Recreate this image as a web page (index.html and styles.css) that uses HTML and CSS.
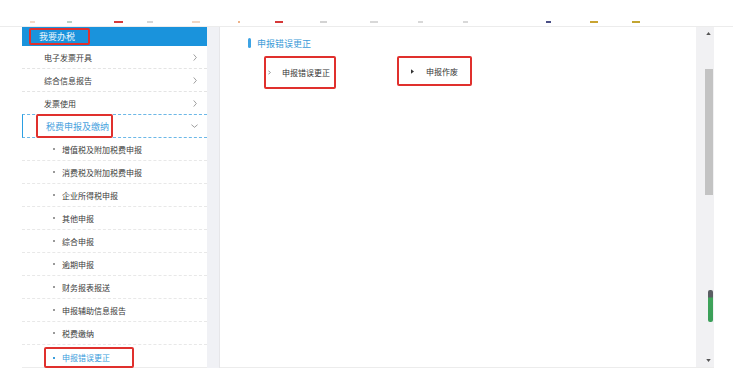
FILE: index.html
```html
<!DOCTYPE html>
<html lang="zh">
<head>
<meta charset="utf-8">
<title>申报错误更正</title>
<link rel="stylesheet" href="styles.css">
</head>
<body>
<div class="topbar">
  <span class="mk m1"></span><span class="mk m2"></span><span class="mk m3"></span><span class="mk m4"></span><span class="mk m5"></span><span class="mk m6"></span><span class="mk m7"></span><span class="mk m8"></span><span class="mk m9"></span><span class="mk m10"></span><span class="mk m11"></span><span class="mk m12"></span><span class="mk m13"></span><span class="mk m14"></span>
</div>
<div class="frame">
  <nav class="sidebar">
    <div class="side-head"><span class="redbox head-box">我要办税</span></div>
    <div class="row"><span>电子发票开具</span><svg class="chev" viewBox="0 0 4 8"><polyline points="0.5,0.5 3.5,4 0.5,7.5"/></svg></div>
    <div class="row"><span>综合信息报告</span><svg class="chev" viewBox="0 0 4 8"><polyline points="0.5,0.5 3.5,4 0.5,7.5"/></svg></div>
    <div class="row"><span>发票使用</span><svg class="chev" viewBox="0 0 4 8"><polyline points="0.5,0.5 3.5,4 0.5,7.5"/></svg></div>
    <div class="row parent"><span class="redbox parent-box">税费申报及缴纳</span><svg class="chev-down" viewBox="0 0 8 4"><polyline points="0.5,0.5 4,3.5 7.5,0.5"/></svg></div>
    <div class="sub"><i class="dot"></i>增值税及附加税费申报</div>
    <div class="sub"><i class="dot"></i>消费税及附加税费申报</div>
    <div class="sub"><i class="dot"></i>企业所得税申报</div>
    <div class="sub"><i class="dot"></i>其他申报</div>
    <div class="sub"><i class="dot"></i>综合申报</div>
    <div class="sub"><i class="dot"></i>逾期申报</div>
    <div class="sub"><i class="dot"></i>财务报表报送</div>
    <div class="sub"><i class="dot"></i>申报辅助信息报告</div>
    <div class="sub"><i class="dot"></i>税费缴纳</div>
    <div class="sub active"><span class="redbox sub-box"><i class="dot blue"></i>申报错误更正</span></div>
  </nav>
  <div class="gutter"></div>
  <main class="main">
    <div class="title"><i class="title-bar"></i>申报错误更正</div>
    <div class="cards">
      <div class="card card1"><svg class="arr1" viewBox="0 0 4 6"><polyline points="0.5,0.5 3,3 0.5,5.5"/></svg><span>申报错误更正</span></div>
      <div class="card card2"><svg class="arr2" viewBox="0 0 4 6"><polygon points="0,0 4,3 0,6"/></svg><span>申报作废</span></div>
    </div>
  </main>
  <div class="scroll">
    <svg class="sarrow up" viewBox="0 0 6 4"><polygon points="3,0 6,4 0,4"/></svg>
    <div class="thumb"></div>
    <div class="green"></div>
    <svg class="sarrow down" viewBox="0 0 6 4"><polygon points="0,0 6,0 3,4"/></svg>
  </div>
</div>
</body>
</html>
```
FILE: styles.css
```css
* { box-sizing: border-box; }
html, body { margin: 0; padding: 0; background: #fff; }
body {
  width: 733px;
  height: 385px;
  overflow: hidden;
  font-family: "Noto Sans CJK SC", "Noto Sans", sans-serif;
  color: #333;
}
.topbar {
  height: 27px;
  border-bottom: 1px solid #ececec;
  display: flex;
  align-items: flex-start;
  padding-top: 21px;
}
.mk { display: block; height: 2px; flex: none; }
.m1 { margin-left: 30px; width: 5px; background: #f3d9c8; }
.m2 { margin-left: 32px; width: 5px; background: #b9d2c6; }
.m3 { margin-left: 42px; width: 9px; background: #d93a3a; }
.m4 { margin-left: 24px; width: 6px; background: #d6d6d6; }
.m5 { margin-left: 39px; width: 8px; background: #f2d6c3; }
.m6 { margin-left: 38px; width: 2px; background: #eeb38a; }
.m7 { margin-left: 35px; width: 8px; background: #d63838; }
.m8 { margin-left: 37px; width: 7px; background: #d3d3d3; }
.m9 { margin-left: 43px; width: 8px; background: #d8d8d8; }
.m10 { margin-left: 40px; width: 5px; background: #d8d8d8; }
.m11 { margin-left: 40px; width: 5px; background: #d8d8d8; }
.m12 { margin-left: 78px; width: 5px; background: #4a4f86; }
.m13 { margin-left: 39px; width: 8px; background: #c9a431; }
.m14 { margin-left: 34px; width: 8px; background: #c2a531; }

.frame {
  display: flex;
  margin-left: 22px;
  width: 692px;
  height: 341px;
}
.sidebar {
  width: 185px;
  flex: none;
  border-bottom: 1px solid #ececec;
}
.side-head {
  height: 19px;
  background: #1a93dc;
  color: #fff;
  font-size: 9px;
  display: flex;
  align-items: center;
  padding-left: 7px;
}
.redbox {
  border: 2px solid #e0302d;
  border-radius: 2px;
}
.head-box {
  height: 17px;
  display: flex;
  align-items: center;
  padding: 0 13px 0 8px;
  line-height: 1;
  color: #eaf5fd;
}
.row {
  height: 23px;
  border-bottom: 1px dashed #e4e4e4;
  font-size: 8px;
  display: flex;
  align-items: center;
  justify-content: space-between;
  padding-left: 22px;
  padding-right: 10px;
  color: #3a3a3a;
}
.chev { width: 4px; height: 7px; fill: none; stroke: #777; stroke-width: 0.8; }
.chev-down { width: 7px; height: 4px; fill: none; stroke: #777; stroke-width: 0.8; margin-right: -1px; }
.row.parent {
  border-left: 1px solid #2b9fe2;
  border-top: 1px dashed #6bb8e8;
  border-bottom: 1px dashed #6bb8e8;
  margin-top: -1px;
  height: 24px;
  padding-left: 13px;
  color: #4aa3de;
  font-size: 9px;
}
.parent-box {
  height: 24px;
  width: 77px;
  display: flex;
  align-items: center;
  padding-left: 8px;
  margin-top: -1px;
  margin-bottom: -1px;
}
.sub {
  height: 23px;
  border-bottom: 1px dashed #e8e8e8;
  font-size: 8px;
  display: flex;
  align-items: center;
  padding-left: 31px;
  color: #3a3a3a;
}
.dot {
  display: block;
  width: 2px;
  height: 2px;
  background: #9a9a9a;
  margin-right: 7px;
  flex: none;
}
.dot.blue { background: #3a9ddc; }
.sub.active {
  padding-left: 22px;
  border-bottom: none;
  color: #3a9ddc;
  align-items: flex-end;
}
.sub-box {
  width: 90px;
  height: 21px;
  display: flex;
  align-items: center;
  padding-left: 7px;
}
.gutter {
  width: 13px;
  flex: none;
  background: #f0f1f5;
  border-right: 1px solid #e6e6e9;
}
.main {
  flex: 1;
  border-bottom: 1px solid #ececec;
  padding: 10px 0 0 28px;
}
.title {
  display: flex;
  align-items: center;
  height: 12px;
  font-size: 9px;
  color: #3d9bd8;
}
.title-bar {
  display: block;
  width: 3px;
  height: 10px;
  border-radius: 2px;
  background: #3da3e4;
  margin-right: 6px;
}
.cards {
  display: flex;
  align-items: flex-start;
  margin-top: 7px;
  padding-left: 16px;
  gap: 61px;
}
.card {
  display: flex;
  align-items: center;
  font-size: 8px;
  color: #333;
  border: 2px solid #e0302d;
  border-radius: 2px;
}
.card1 { width: 72px; height: 33px; padding-left: 2px; }
.card2 { width: 75px; height: 30px; padding-left: 12px; }
.arr1 { width: 3px; height: 5px; fill: none; stroke: #555; stroke-width: 0.9; margin-right: 11px; }
.arr2 { width: 3px; height: 5px; fill: #333; margin-right: 12px; }

.scroll {
  width: 18px;
  flex: none;
  background: #f1f1f3;
  position: relative;
  border-bottom: 1px solid #ececec;
}
.sarrow { position: absolute; left: 10px; width: 5px; height: 3px; fill: #555; }
.sarrow.up { top: 5px; }
.sarrow.down { bottom: 5px; }
.thumb {
  position: absolute;
  left: 9px;
  top: 42px;
  width: 8px;
  height: 126px;
  background: #c3c3c3;
}
.green {
  position: absolute;
  left: 12px;
  top: 263px;
  width: 5px;
  height: 32px;
  border-radius: 2px;
  background: linear-gradient(#5a5e63 0, #5a5e63 7px, #3fa45b 8px, #3a9e58 100%);
}
```
